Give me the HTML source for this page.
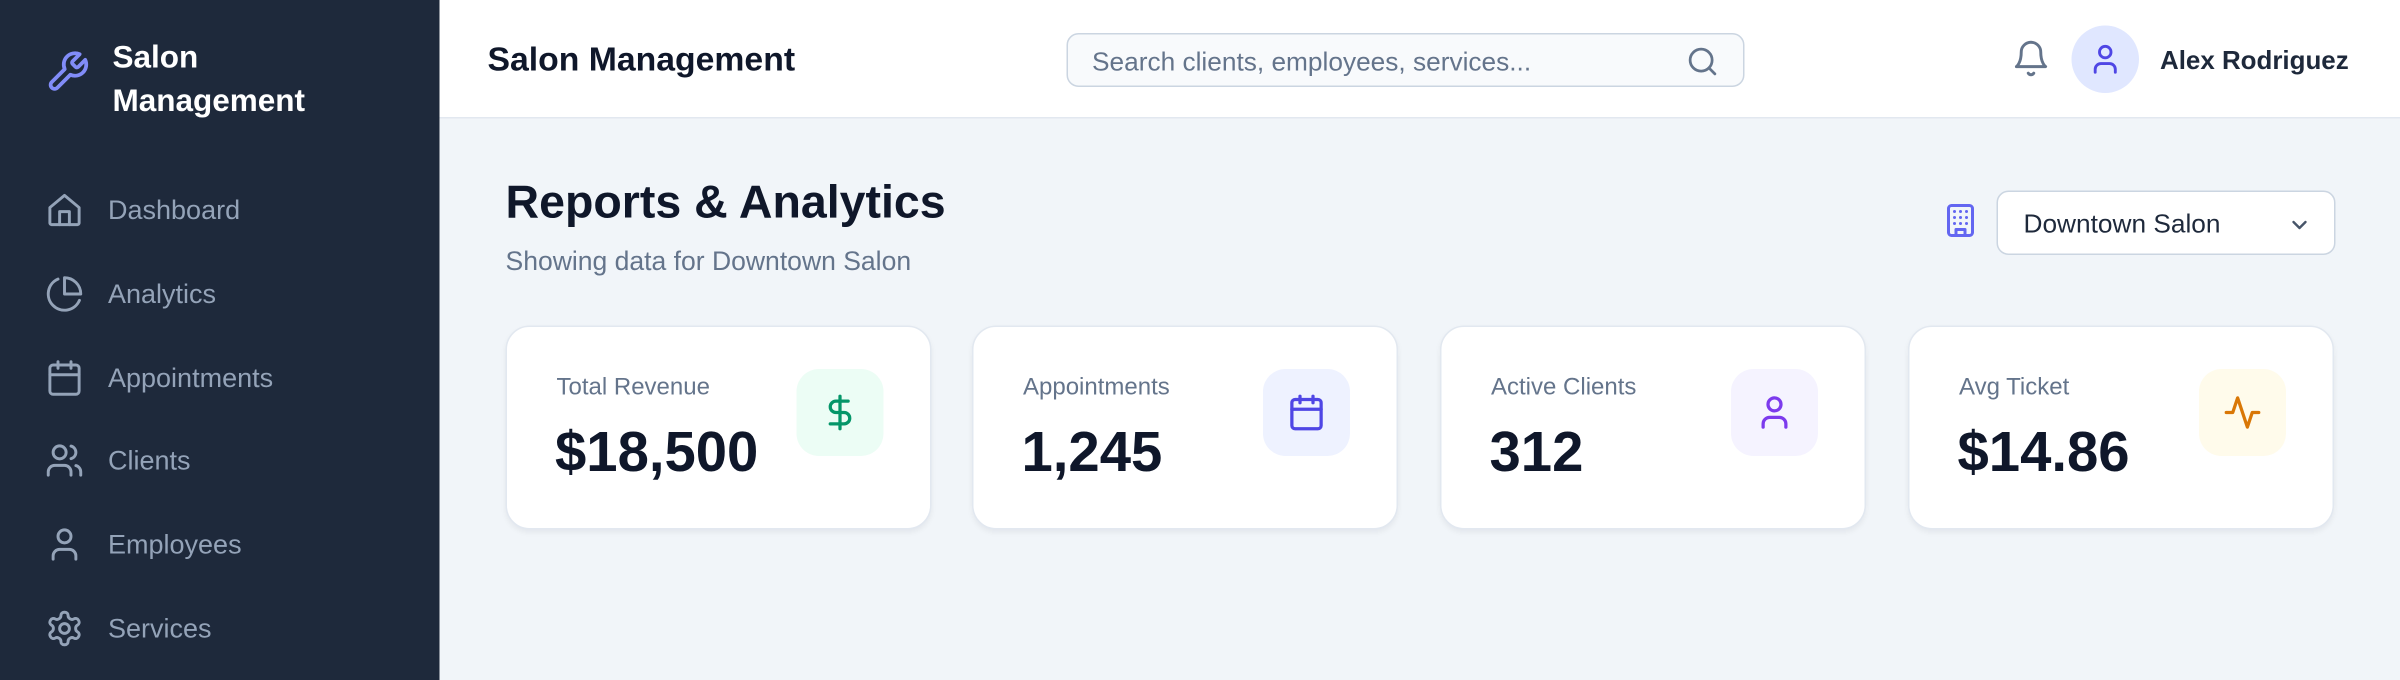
<!DOCTYPE html>
<html><head><meta charset="utf-8"><style>
*{box-sizing:border-box;margin:0;padding:0}
html,body{width:2400px;height:680px;overflow:hidden;background:#f1f5f9}
#w{width:1600px;height:454px;transform:scale(1.5);transform-origin:0 0;position:relative;font-family:"Liberation Sans",sans-serif;background:#f1f5f9}
.sb{position:absolute;left:0;top:0;width:293px;height:454px;background:#1e293b}
.logo{position:absolute;left:30px;top:33px;width:30px;height:30px}
.brand{position:absolute;left:75px;top:24px;color:#fff;font-weight:bold;font-size:21px;line-height:29px}
.nav{position:absolute;left:0;width:293px;height:40px;display:flex;align-items:center;color:#94a3b8;font-size:18px}
.nav svg{position:absolute;left:30px;width:26px;height:26px}
.nav span{position:absolute;left:72px}
.hd{position:absolute;left:293px;top:0;right:0;height:79px;background:#fff;border-bottom:1.5px solid #e2e8f0}
.t{position:absolute;left:32px;top:27px;font-weight:bold;font-size:22.5px;color:#0f172a}
.search{position:absolute;left:418px;top:22px;width:452px;height:36px;border:1px solid #cbd5e1;border-radius:8px;background:#f8fafc;color:#64748b;font-size:17.5px;padding:8px 0 0 16px}
.search svg{position:absolute;right:16px;top:7px}
.av{position:absolute;left:1088px;top:17px;width:45px;height:45px;border-radius:50%;background:#e0e7ff}
.name{position:absolute;left:1147px;top:30px;font-weight:bold;font-size:17.3px;color:#1e293b}
h1{position:absolute;left:337px;top:117px;font-size:31px;font-weight:bold;color:#0f172a}
.sub{position:absolute;left:337px;top:164px;font-size:17.7px;color:#64748b}
.sel{position:absolute;left:1331px;top:127px;width:226px;height:43px;background:#fff;border:1.5px solid #cbd5e1;border-radius:8px;font-size:17.5px;color:#1e293b;padding:11px 0 0 17px}
.sel svg{position:absolute;right:15px;top:14px}
.card{position:absolute;top:217px;width:284px;height:136px;background:#fff;border:1px solid #e2e8f0;border-radius:16px;box-shadow:0 2px 4px rgba(15,23,42,.06)}
.card .l{position:absolute;left:33px;top:32px;font-size:16px;color:#64748b}
.card .v{position:absolute;left:32px;top:62px;font-size:37.5px;font-weight:bold;color:#0f172a}
.card .ib{position:absolute;left:193px;top:28px;width:58px;height:58px;border-radius:15px;display:flex;align-items:center;justify-content:center}
</style></head><body><div id="w">
<div class="sb">
<svg class="logo" viewBox="0 0 24 24" fill="none" stroke="#818cf8" stroke-width="2" stroke-linecap="round" stroke-linejoin="round"><path d="M14.7 6.3a1 1 0 0 0 0 1.4l1.6 1.6a1 1 0 0 0 1.4 0l3.77-3.770a6 6 0 0 1-7.94 7.94l-6.910 6.91a2.12 2.12 0 0 1-3-3l6.91-6.91a6 6 0 0 1 7.94-7.94l-3.76 3.76z"/></svg>
<div class="brand">Salon<br>Management</div>
<div class="nav" style="top:120px"><svg viewBox="0 0 24 24" fill="none" stroke="#94a3b8" stroke-width="1.8" stroke-linecap="round" stroke-linejoin="round"><path d="M3 10.5 12 3l9 7.5V20a1 1 0 0 1-1 1H4a1 1 0 0 1-1-1z"/><path d="M9 21v-8h6v8"/></svg><span>Dashboard</span></div>
<div class="nav" style="top:176px"><svg viewBox="0 0 24 24" fill="none" stroke="#94a3b8" stroke-width="1.8" stroke-linecap="round" stroke-linejoin="round"><path d="M21.2 15.9A10 10 0 1 1 8 2.8"/><path d="M22 12A10 10 0 0 0 12 2v10z"/></svg><span>Analytics</span></div>
<div class="nav" style="top:232px"><svg viewBox="0 0 24 24" fill="none" stroke="#94a3b8" stroke-width="1.8" stroke-linecap="round" stroke-linejoin="round"><rect x="3" y="4" width="18" height="18" rx="2"/><path d="M16 2v4M8 2v4M3 10h18"/></svg><span>Appointments</span></div>
<div class="nav" style="top:287px"><svg viewBox="0 0 24 24" fill="none" stroke="#94a3b8" stroke-width="1.8" stroke-linecap="round" stroke-linejoin="round"><path d="M16 21v-2a4 4 0 0 0-4-4H6a4 4 0 0 0-4 4v2"/><circle cx="9" cy="7" r="4"/><path d="M22 21v-2a4 4 0 0 0-3-3.87M16 3.13a4 4 0 0 1 0 7.75"/></svg><span>Clients</span></div>
<div class="nav" style="top:343px"><svg viewBox="0 0 24 24" fill="none" stroke="#94a3b8" stroke-width="1.8" stroke-linecap="round" stroke-linejoin="round"><circle cx="12" cy="7" r="4"/><path d="M19 21v-2a4 4 0 0 0-4-4H9a4 4 0 0 0-4 4v2"/></svg><span>Employees</span></div>
<div class="nav" style="top:399px"><svg viewBox="0 0 24 24" fill="none" stroke="#94a3b8" stroke-width="1.8" stroke-linecap="round" stroke-linejoin="round"><path d="M12.22 2h-.44a2 2 0 0 0-2 2v.18a2 2 0 0 1-1 1.73l-.43.25a2 2 0 0 1-2 0l-.15-.08a2 2 0 0 0-2.73.73l-.22.38a2 2 0 0 0 .73 2.73l.15.1a2 2 0 0 1 1 1.72v.51a2 2 0 0 1-1 1.74l-.15.09a2 2 0 0 0-.73 2.73l.22.38a2 2 0 0 0 2.73.73l.15-.08a2 2 0 0 1 2 0l.43.25a2 2 0 0 1 1 1.73V20a2 2 0 0 0 2 2h.44a2 2 0 0 0 2-2v-.18a2 2 0 0 1 1-1.73l.43-.25a2 2 0 0 1 2 0l.15.08a2 2 0 0 0 2.73-.73l.22-.39a2 2 0 0 0-.73-2.730l-.15-.08a2 2 0 0 1-1-1.74v-.5a2 2 0 0 1 1-1.74l.15-.09a2 2 0 0 0 .73-2.73l-.22-.38a2 2 0 0 0-2.73-.73l-.15.08a2 2 0 0 1-2 0l-.43-.25a2 2 0 0 1-1-1.73V4a2 2 0 0 0-2-2z"/><circle cx="12" cy="12" r="3"/></svg><span>Services</span></div>
</div>
<div class="hd">
<div class="t">Salon Management</div>
<div class="search">Search clients, employees, services...<svg width="22" height="22" viewBox="0 0 24 24" fill="none" stroke="#64748b" stroke-width="2" stroke-linecap="round"><circle cx="11" cy="11" r="8"/><path d="m21 21-4.3-4.3"/></svg></div>
<svg style="position:absolute;left:1048px;top:26px" width="26" height="26" viewBox="0 0 24 24" fill="none" stroke="#64748b" stroke-width="1.8" stroke-linecap="round" stroke-linejoin="round"><path d="M6 8a6 6 0 0 1 12 0c0 7 3 9 3 9H3s3-2 3-9"/><path d="M10.3 21a1.94 1.94 0 0 0 3.4 0"/></svg>
<div class="av"><svg style="position:absolute;left:11px;top:11px" width="23" height="23" viewBox="0 0 24 24" fill="none" stroke="#4f46e5" stroke-width="2" stroke-linecap="round"><circle cx="12" cy="7" r="4"/><path d="M19 21v-2a4 4 0 0 0-4-4H9a4 4 0 0 0-4 4v2"/></svg></div>
<div class="name">Alex Rodriguez</div>
</div>
<h1>Reports &amp; Analytics</h1>
<div class="sub">Showing data for Downtown Salon</div>
<svg style="position:absolute;left:1295px;top:135px" width="24" height="24" viewBox="0 0 24 24" fill="none" stroke="#6366f1" stroke-width="2" stroke-linecap="round" stroke-linejoin="round"><rect x="4" y="2" width="16" height="20" rx="2"/><path d="M9 22v-4h6v4M8 6h.01M16 6h.01M8 10h.01M16 10h.01M8 14h.01M16 14h.01M12 6h.01M12 10h.01M12 14h.01"/></svg>
<div class="sel">Downtown Salon<svg width="16" height="16" viewBox="0 0 24 24" fill="none" stroke="#475569" stroke-width="2.4" stroke-linecap="round" stroke-linejoin="round"><path d="m6 9 6 6 6-6"/></svg></div>

<div class="card" style="left:337px"><div class="l">Total Revenue</div><div class="v">$18,500</div><div class="ib" style="background:#ecfdf5"><svg width="26" height="26" viewBox="0 0 24 24" fill="none" stroke="#059669" stroke-width="2" stroke-linecap="round"><path d="M12 2v20M17 5H9.5a3.5 3.5 0 0 0 0 7h5a3.5 3.5 0 0 1 0 7H6"/></svg></div></div>
<div class="card" style="left:648px"><div class="l">Appointments</div><div class="v">1,245</div><div class="ib" style="background:#eef2ff"><svg width="26" height="26" viewBox="0 0 24 24" fill="none" stroke="#4f46e5" stroke-width="2" stroke-linecap="round"><rect x="3" y="4" width="18" height="18" rx="2"/><path d="M16 2v4M8 2v4M3 10h18"/></svg></div></div>
<div class="card" style="left:960px"><div class="l">Active Clients</div><div class="v">312</div><div class="ib" style="background:#f5f3ff"><svg width="26" height="26" viewBox="0 0 24 24" fill="none" stroke="#7c3aed" stroke-width="2" stroke-linecap="round"><circle cx="12" cy="7" r="4"/><path d="M19 21v-2a4 4 0 0 0-4-4H9a4 4 0 0 0-4 4v2"/></svg></div></div>
<div class="card" style="left:1272px"><div class="l">Avg Ticket</div><div class="v">$14.86</div><div class="ib" style="background:#fffbeb"><svg width="26" height="26" viewBox="0 0 24 24" fill="none" stroke="#d97706" stroke-width="2" stroke-linecap="round" stroke-linejoin="round"><path d="M22 12h-4l-3 9L9 3l-3 9H2"/></svg></div></div>
</div></body></html>
